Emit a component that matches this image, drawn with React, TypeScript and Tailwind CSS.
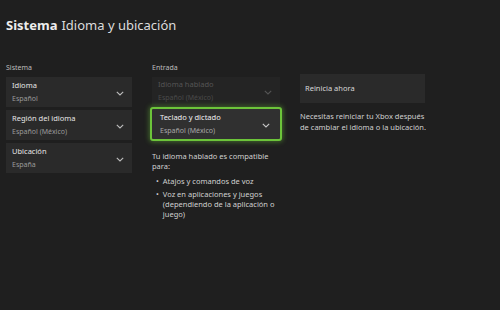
import React from "react";

function Chevron({ className = "" }: { className?: string }) {
  return (
    <svg width="8" height="5" viewBox="0 0 8 5" className={className}>
      <path d="M0.8 0.8 L4 4 L7.2 0.8" fill="none" stroke="currentColor" strokeWidth="1.1" />
    </svg>
  );
}

function Box({ title, sub }: { title: string; sub: string }) {
  return (
    <div className="h-[30px] bg-[#2a2a2a] flex items-center pl-[6px] pr-[8px]">
      <div className="flex-1 flex flex-col gap-[4px]">
        <div className="text-[7.5px] leading-[9px] text-[#e6e6e6]">{title}</div>
        <div className="text-[7px] leading-[9px] text-[#9a9a9a]">{sub}</div>
      </div>
      <Chevron className="text-[#bdbdbd] mt-[2px]" />
    </div>
  );
}

export default function App() {
  return (
    <div
      className="w-[500px] h-[310px] bg-[#1f1f1f] overflow-hidden"
      style={{ fontFamily: '"Noto Sans", "Open Sans", sans-serif' }}
    >
      <div className="pt-[14px] pl-[6px] flex items-baseline gap-[4px] text-[13px] leading-[22px]">
        <span className="font-bold text-[#ededed]">Sistema</span>
        <span className="text-[#dcdcdc]">Idioma y ubicación</span>
      </div>
      <div className="flex pl-[6px] pt-[27px] gap-[18px]">
        <div className="w-[126px] flex flex-col">
          <div className="text-[7px] leading-[10px] text-[#bdbdbd] h-[11px]">Sistema</div>
          <div className="flex flex-col gap-[3px] mt-[3px]">
            <Box title="Idioma" sub="Español" />
            <Box title="Región del idioma" sub="Español (México)" />
            <Box title="Ubicación" sub="España" />
          </div>
        </div>
        <div className="w-[132px] flex flex-col">
          <div className="text-[7px] leading-[10px] text-[#bdbdbd] h-[11px] pl-[2px]">Entrada</div>
          <div className="mx-[2px] mt-[3px] h-[28px] bg-[#242424] flex items-center pl-[6px] pr-[8px]">
            <div className="flex-1 flex flex-col gap-[4px]">
              <div className="text-[7.5px] leading-[9px] text-[#555555]">Idioma hablado</div>
              <div className="text-[7px] leading-[9px] text-[#4a4a4a]">Español (México)</div>
            </div>
            <Chevron className="text-[#555555] mt-[2px]" />
          </div>
          <div className="mt-[2px] h-[34px] bg-[#303030] rounded-[3px] border-[2px] border-[#6cc43a] shadow-[0_0_5px_1px_rgba(108,196,58,0.45)] flex items-center pl-[8px] pr-[10px]">
            <div className="flex-1 flex flex-col gap-[4px]">
              <div className="text-[7.5px] leading-[9px] text-[#f0f0f0]">Teclado y dictado</div>
              <div className="text-[7px] leading-[9px] text-[#a8a8a8]">Español (México)</div>
            </div>
            <Chevron className="text-[#c8c8c8] mt-[2px]" />
          </div>
          <div className="mt-[10px] pl-[2px] text-[7.5px] leading-[10px] text-[#d0d0d0]">
            <p>Tu idioma hablado es compatible<br />para:</p>
            <ul className="mt-[5px] flex flex-col gap-[3px]">
              <li className="flex gap-[4px] pl-[4px]"><span>•</span><span>Atajos y comandos de voz</span></li>
              <li className="flex gap-[4px] pl-[4px]"><span>•</span><span>Voz en aplicaciones y juegos (dependiendo de la aplicación o juego)</span></li>
            </ul>
          </div>
        </div>
        <div className="w-[125px] flex flex-col">
          <div className="h-[11px]" />
          <div className="mt-[0px] h-[29px] bg-[#2a2a2a] flex items-center pl-[5px] text-[7.5px] text-[#d8d8d8]">
            Reinicia ahora
          </div>
          <div className="mt-[8px] w-[140px] text-[7.5px] leading-[11px] text-[#d0d0d0]">
            Necesitas reiniciar tu Xbox después<br />de cambiar el idioma o la ubicación.
          </div>
        </div>
      </div>
    </div>
  );
}
